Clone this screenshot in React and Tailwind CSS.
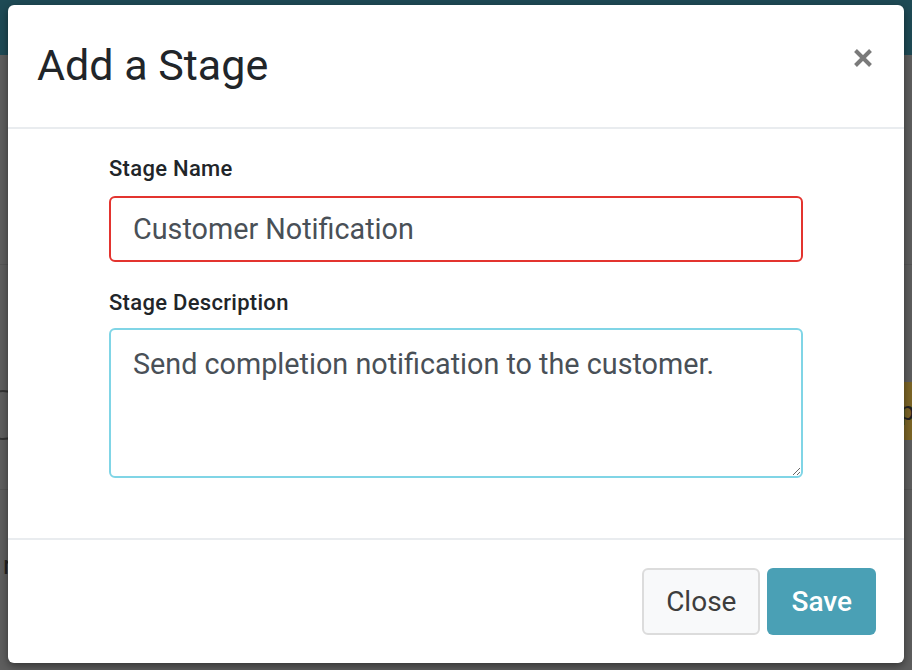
import { useState } from 'react'

export default function App() {
  const [name, setName] = useState('Customer Notification')
  const [description, setDescription] = useState('Send completion notification to the customer.')

  return (
    <div className="relative w-[912px] h-[670px] overflow-hidden bg-[#5e5e5e] font-['Roboto',sans-serif]">
      {/* Page behind the backdrop */}
      <div className="h-[55px] bg-[#1e4a55]" />
      <div className="h-[210px] border-b border-[#555]" />
      <div className="flex items-start justify-between h-[225px] border-b border-[#555]">
        <div className="mt-[125px] -ml-[22px] w-[50px] h-[50px] rounded-full border-2 border-[#333] flex items-center justify-center">
          <div className="ml-[18px] w-[6px] h-[6px] rounded-full bg-[#333]" />
        </div>
        <div className="mt-[117px] w-[12px] h-[58px] bg-[#7c6526] text-[26px] leading-[58px] text-[#222] overflow-hidden">p</div>
      </div>
      <div className="pl-[3px] pt-[62px] text-[26px] leading-none text-[#222]">r</div>

      {/* Modal */}
      <div className="absolute left-[8px] top-[5px] w-[896px] h-[658px] rounded-[6px] bg-white shadow-[0_3px_8px_rgba(0,0,0,0.45)] flex flex-col">
        {/* Header */}
        <div className="flex items-center justify-between h-[124px] px-[29px] border-b-2 border-[#e9ecef]">
          <h4 className="text-[43px] leading-[1.2] font-normal text-[#212529]">Add a Stage</h4>
          <button className="-mt-[17px] mr-[2px] text-[#7a7a7a]">
            <svg width="20" height="20" viewBox="0 0 20 20">
              <path d="M2.5 2.5L17.5 17.5M17.5 2.5L2.5 17.5" stroke="currentColor" strokeWidth="4" />
            </svg>
          </button>
        </div>

        {/* Body */}
        <div className="flex-1 px-[101px] pt-[24px] border-b-2 border-[#e9ecef]">
          <label className="block text-[22px] leading-[31px] font-medium tracking-[0.3px] text-[#212529] mb-[12px]">Stage Name</label>
          <input
            value={name}
            onChange={(e) => setName(e.target.value)}
            className="block w-full h-[66px] px-[22px] rounded-[6px] border-2 border-[#e3342f] text-[28.75px] text-[#495057] outline-none"
          />
          <label className="block mt-[25px] text-[22px] leading-[31px] font-medium tracking-[0.3px] text-[#212529] mb-[10px]">Stage Description</label>
          <textarea
            value={description}
            onChange={(e) => setDescription(e.target.value)}
            className="block w-full h-[150px] px-[22px] pt-[13px] rounded-[6px] border-2 border-[#80d5e6] text-[28.75px] leading-[42px] text-[#495057] outline-none resize-y"
          />
        </div>

        {/* Footer */}
        <div className="flex items-center justify-end gap-[7px] h-[123px] px-[28px]">
          <button className="h-[67px] px-[22px] rounded-[6px] border-2 border-[#dcdcdc] bg-[#f8f9fa] text-[28px] text-[#3d3d3d]">
            Close
          </button>
          <button className="h-[67px] px-[24px] rounded-[6px] bg-[#4aa0b5] text-[28px] font-medium text-white">
            Save
          </button>
        </div>
      </div>
    </div>
  )
}
